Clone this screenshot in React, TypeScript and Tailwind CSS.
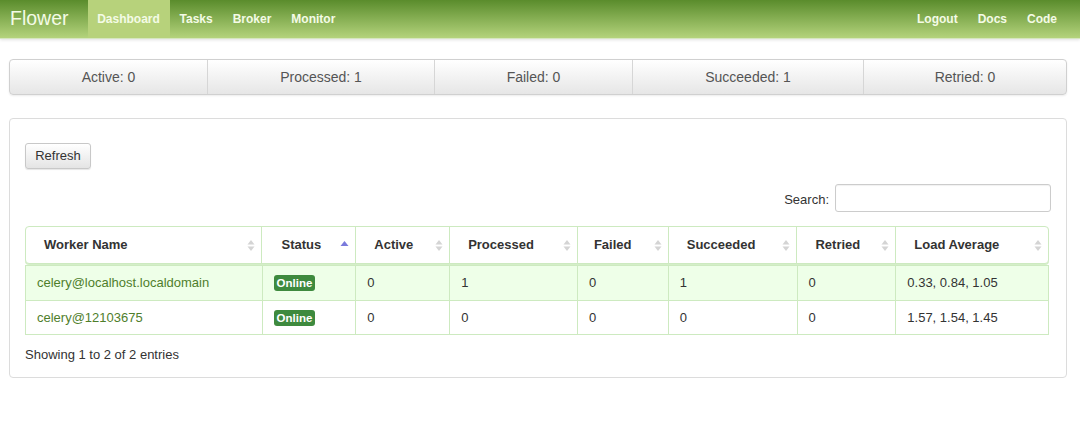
import React from "react";

const cols = [
  { name: "Worker Name", w: "w-[236px]", pl: "pl-[18px]" },
  { name: "Status", w: "w-[94px]", pl: "pl-[19px]", sorted: true },
  { name: "Active", w: "w-[94px]", pl: "pl-[18px]" },
  { name: "Processed", w: "w-[128px]", pl: "pl-[18px]" },
  { name: "Failed", w: "w-[91px]", pl: "pl-[16px]" },
  { name: "Succeeded", w: "w-[129px]", pl: "pl-[18px]" },
  { name: "Retried", w: "w-[99px]", pl: "pl-[18px]" },
  { name: "Load Average", w: "w-[153px]", pl: "pl-[18px]" },
];

const rows = [
  { name: "celery@localhost.localdomain", vals: ["0", "1", "0", "1", "0", "0.33, 0.84, 1.05"], bg: "bg-[#eeffe8]", h: "h-[35px]" },
  { name: "celery@12103675", vals: ["0", "0", "0", "0", "0", "1.57, 1.54, 1.45"], bg: "bg-white", h: "h-[34px]" },
];

function SortBoth() {
  return (
    <svg width="8" height="13" viewBox="0 0 8 13" className="shrink-0">
      <path d="M4 1 L7.5 5.5 H0.5 Z" fill="#d4d4d4" />
      <path d="M4 12 L7.5 7.5 H0.5 Z" fill="#d4d4d4" />
    </svg>
  );
}

function SortUp() {
  return (
    <svg width="9" height="13" viewBox="0 0 9 13" className="shrink-0">
      <path d="M4.5 2 L8.5 7 H0.5 Z" fill="#7a7adc" />
    </svg>
  );
}

export default function App() {
  const stats = [
    { t: "Active: 0", w: "w-[197px]" },
    { t: "Processed: 1", w: "w-[227px]" },
    { t: "Failed: 0", w: "w-[198px]" },
    { t: "Succeeded: 1", w: "w-[231px]" },
    { t: "Retried: 0", w: "flex-1" },
  ];
  return (
    <div className="w-[1080px] h-[443px] bg-white font-['Liberation_Sans',Arial,sans-serif] text-[#333]">
      {/* Navbar */}
      <div className="h-[39px] flex items-stretch bg-[linear-gradient(to_bottom,#5a8c2c,#b4d37c)] border-b border-[#d6e6c0] shadow-[0_1px_3px_rgba(0,0,0,0.12)]">
        <div className="pl-[10px] pr-[19px] flex items-center text-[19.5px] text-[#f4fbe6] leading-none">Flower</div>
        <div className="flex items-stretch text-[12px] font-bold text-[#f4fbe6]">
          <div className="flex items-center bg-[#b7d27b] w-[82px] justify-center">Dashboard</div>
          <div className="px-[10px] flex items-center">Tasks</div>
          <div className="px-[10px] flex items-center">Broker</div>
          <div className="px-[10px] flex items-center">Monitor</div>
        </div>
        <div className="ml-auto flex items-stretch text-[12px] font-bold text-[#f4fbe6] pr-[13px]">
          <div className="px-[10px] flex items-center">Logout</div>
          <div className="px-[10px] flex items-center">Docs</div>
          <div className="px-[10px] flex items-center">Code</div>
        </div>
      </div>

      {/* Stats */}
      <div className="ml-[9px] mt-[20px] w-[1058px] h-[36px] flex border border-[#d0d0d0] rounded-[4px] bg-[linear-gradient(to_bottom,#ffffff,#e6e6e6)] shadow-[0_1px_2px_rgba(0,0,0,0.08)]">
        {stats.map((s, i) => (
          <div
            key={s.t}
            className={`${s.w} flex items-center justify-center text-[14px] text-[#555] ${i > 0 ? "border-l border-[#d6d6d6]" : ""}`}
          >
            {s.t}
          </div>
        ))}
      </div>

      {/* Panel */}
      <div className="ml-[9px] mt-[23px] w-[1058px] h-[260px] border border-[#dcdcdc] rounded-[4px] px-[15px] pt-[24px]">
        <button className="h-[26px] w-[66px] text-[13px] text-[#333] border border-[#c8c8c8] rounded-[3px] bg-[linear-gradient(to_bottom,#ffffff,#e4e4e4)] shadow-[0_1px_1px_rgba(0,0,0,0.1)]">
          Refresh
        </button>
        <div className="mt-[15px] flex justify-end items-center w-[1026px] text-[13px] text-[#333]">
          <span className="mr-[6px] mt-[4px]">Search:</span>
          <div className="w-[216px] h-[28px] border border-[#cccccc] rounded-[3px] bg-white shadow-[inset_0_1px_1px_rgba(0,0,0,0.06)]" />
        </div>

        {/* Table */}
        <div className="mt-[14px] w-[1024px]">
          <div className="flex h-[38px] border border-[#cdeac0] rounded-[4px] bg-white shadow-[0_1px_0_#d4eec8]">
            {cols.map((c, i) => (
              <div
                key={c.name}
                className={`${c.w} ${c.pl} pr-[6px] flex items-center justify-between text-[13px] font-bold text-[#333] ${i > 0 ? "border-l border-[#cdeac0]" : ""}`}
              >
                <span>{c.name}</span>
                {c.sorted ? <SortUp /> : <SortBoth />}
              </div>
            ))}
          </div>
          <div className="mt-[1px] border-x border-[#cdeac0]">
            {rows.map((r) => (
              <div key={r.name} className={`flex ${r.h} border-t border-[#cdeac0] ${r.bg}`}>
                <div className="w-[236px] pl-[11px] flex items-center text-[13px] text-[#4f7e2b]">{r.name}</div>
                <div className="w-[94px] pl-[11px] flex items-center border-l border-[#cdeac0]">
                  <span className="bg-[#3e8a3e] text-white text-[11.5px] font-bold px-[3px] h-[16px] leading-[16px] rounded-[3px]">
                    Online
                  </span>
                </div>
                {r.vals.map((v, i) => (
                  <div
                    key={i}
                    className={`${cols[i + 2].w} pl-[11px] flex items-center border-l border-[#cdeac0] text-[13px] text-[#333]`}
                  >
                    {v}
                  </div>
                ))}
              </div>
            ))}
          </div>
          <div className="border-t border-[#cdeac0]" />
        </div>
        <div className="mt-[10px] text-[13px] text-[#333]">Showing 1 to 2 of 2 entries</div>
      </div>
    </div>
  );
}
